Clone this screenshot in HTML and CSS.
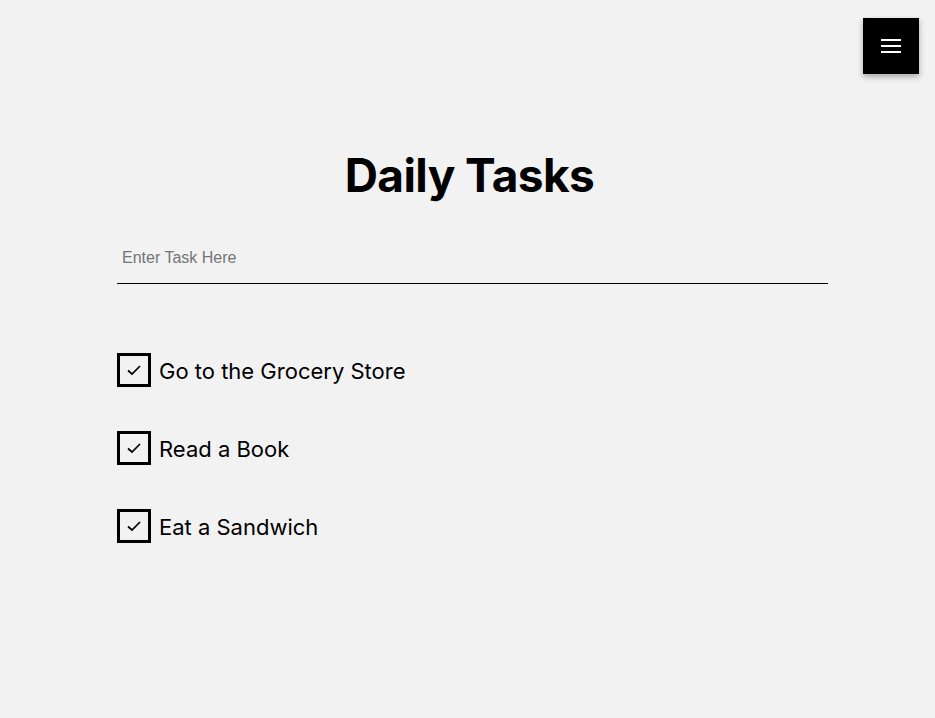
FILE: index.html
```html
<!DOCTYPE html>
<html lang="en">
<head>
    <meta charset="UTF-8">
    <meta name="viewport" content="width=device-width, initial-scale=1.0">
    <title>Daily Tasks</title>
    <link rel="stylesheet" href="styles.css">
</head>
<body>
    <button class="menu-button" type="button" aria-label="Menu">
        <span></span>
        <span></span>
        <span></span>
    </button>
    <main class="container">
        <h1>Daily Tasks</h1>
        <input type="text" class="task-input" placeholder="Enter Task Here">
        <ul class="task-list">
            <li class="task">
                <span class="check">
                    <svg width="16" height="12" viewBox="0 0 16 12"><path d="M2 6.5 L6 10 L14 2" fill="none" stroke="#000" stroke-width="1.7"/></svg>
                </span>
                <span class="task-text">Go to the Grocery Store</span>
            </li>
            <li class="task">
                <span class="check">
                    <svg width="16" height="12" viewBox="0 0 16 12"><path d="M2 6.5 L6 10 L14 2" fill="none" stroke="#000" stroke-width="1.7"/></svg>
                </span>
                <span class="task-text">Read a Book</span>
            </li>
            <li class="task">
                <span class="check">
                    <svg width="16" height="12" viewBox="0 0 16 12"><path d="M2 6.5 L6 10 L14 2" fill="none" stroke="#000" stroke-width="1.7"/></svg>
                </span>
                <span class="task-text">Eat a Sandwich</span>
            </li>
        </ul>
    </main>
</body>
</html>
```

FILE: styles.css
```css
body {
    font-family: Inter, "Noto Sans", sans-serif;
    background-color: #f2f2f2;
    color: #000;
    margin: 0;
    padding: 0;
    min-height: 718px;
}
.menu-button {
    position: absolute;
    top: 18px;
    right: 16px;
    width: 56px;
    height: 56px;
    background-color: #000;
    border: none;
    padding: 0;
    display: flex;
    flex-direction: column;
    align-items: center;
    justify-content: center;
    gap: 4px;
    box-shadow: 0 3px 6px rgba(0, 0, 0, 0.3);
    cursor: pointer;
}
.menu-button span {
    display: block;
    width: 20px;
    height: 2px;
    background-color: #fff;
}
.container {
    width: 711px;
    margin: 0 0 0 117px;
    padding-top: 146px;
}
h1 {
    margin: 0;
    text-align: center;
    font-size: 46px;
    font-weight: 700;
    line-height: 58px;
    letter-spacing: -0.6px;
    padding-right: 6px;
}
.task-input {
    display: block;
    box-sizing: border-box;
    width: 100%;
    margin-top: 32px;
    height: 48px;
    padding: 0 5px 4px;
    font-family: "Liberation Sans", Arial, sans-serif;
    font-size: 16px;
    background: transparent;
    border: none;
    border-bottom: 1px solid #000;
    outline: none;
}
.task-input::placeholder {
    color: #757575;
}
.task-list {
    list-style: none;
    margin: 69px 0 0;
    padding: 0;
}
.task {
    display: flex;
    align-items: center;
    gap: 8px;
    height: 34px;
    margin-bottom: 44px;
}
.check {
    box-sizing: border-box;
    width: 34px;
    height: 34px;
    border: 3px solid #000;
    display: flex;
    align-items: center;
    justify-content: center;
}
.task-text {
    font-size: 22px;
    line-height: 34px;
    padding-top: 2px;
}
```
